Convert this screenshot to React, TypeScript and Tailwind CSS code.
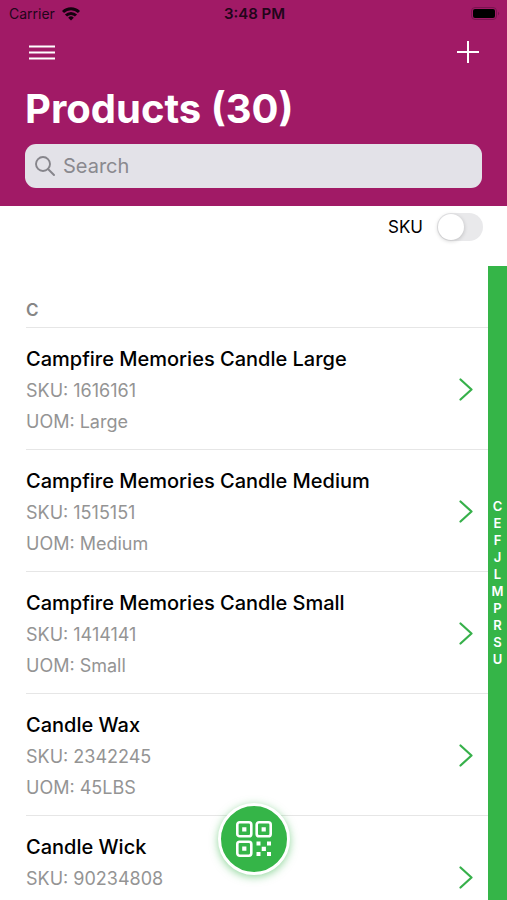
import React from "react";

type Product = { name: string; sku: string; uom?: string };

const products: Product[] = [
  { name: "Campfire Memories Candle Large", sku: "1616161", uom: "Large" },
  { name: "Campfire Memories Candle Medium", sku: "1515151", uom: "Medium" },
  { name: "Campfire Memories Candle Small", sku: "1414141", uom: "Small" },
  { name: "Candle Wax", sku: "2342245", uom: "45LBS" },
  { name: "Candle Wick", sku: "90234808" },
];

const letters = ["C", "E", "F", "J", "L", "M", "P", "R", "S", "U"];

function StatusBar() {
  return (
    <div className="grid h-7 grid-cols-3 items-center pr-[7px] pl-[9px] text-[#22051a]">
      <div className="flex items-center gap-[7px] text-sm">
        <span>Carrier</span>
        <svg width="18" height="14" viewBox="0 0 18 14" fill="none" stroke="#14020e" strokeWidth="3" aria-hidden="true">
          <path d="M1 5a11.3 11.3 0 0 1 16 0" />
          <path d="M4 8.5a7 7 0 0 1 10 0" />
          <path d="M6.2 10.7a4 4 0 0 1 5.6 0L9 13.6z" fill="#14020e" stroke="none" />
        </svg>
      </div>
      <span className="text-center text-[15px] font-semibold">3:48 PM</span>
      <svg className="justify-self-end" width="29" height="14" viewBox="0 0 29 14" aria-hidden="true">
        <rect x="0.5" y="0.5" width="25" height="12" rx="3.5" fill="none" stroke="#7a1350" />
        <rect x="2" y="2" width="22" height="9" rx="2" fill="#000" />
        <path d="M27 4.8a2 2 0 0 1 0 3.6z" fill="#7a1350" />
      </svg>
    </div>
  );
}

function Header() {
  return (
    <header className="shrink-0 bg-[#a11a66] pb-[18px]">
      <StatusBar />
      <div className="flex h-12 items-center justify-between px-7">
        <button type="button" aria-label="Menu" className="text-white">
          <svg width="28" height="18" viewBox="0 0 28 18" stroke="currentColor" strokeWidth="1.8">
            <path d="M1 3.5h26M1 9.5h26M1 15.5h26" />
          </svg>
        </button>
        <button type="button" aria-label="Add product" className="text-white">
          <svg width="22" height="22" viewBox="0 0 22 22" stroke="currentColor" strokeWidth="2">
            <path d="M0 11h22M11 0v22" />
          </svg>
        </button>
      </div>
      <div className="px-[25px]">
        <h1 className="h-[68px] text-[40px] leading-[66px] font-bold text-white">Products (30)</h1>
        <label className="flex h-11 items-center gap-2 rounded-[11px] bg-[#e3e2e8] px-[10px]">
          <svg width="20" height="20" viewBox="0 0 20 20" fill="none" stroke="#86858b" strokeWidth="1.9" strokeLinecap="round" aria-hidden="true">
            <circle cx="8" cy="8" r="7" />
            <path d="M13 13l6 6" />
          </svg>
          <input
            type="text"
            aria-label="Search"
            placeholder="Search"
            className="min-w-0 flex-1 bg-transparent text-xl text-black outline-none placeholder:text-[#8a898f]"
          />
        </label>
      </div>
    </header>
  );
}

function ProductRow({ name, sku, uom }: Product) {
  return (
    <li className="flex min-h-[122px] justify-between border-b border-[#e6e6e6] pt-[15px] pr-[15px] pb-3">
      <div>
        <h3 className="text-xl leading-8 font-medium text-black">{name}</h3>
        <p className="text-lg leading-[31px] text-[#949494]">SKU: {sku}</p>
        {uom && <p className="text-lg leading-[31px] text-[#949494]">UOM: {uom}</p>}
      </div>
      <button type="button" aria-label={"Open " + name} className="self-center text-[#36b04a]">
        <svg width="14" height="24" viewBox="0 0 14 24" fill="none" stroke="currentColor" strokeWidth="2.2" strokeLinecap="round" strokeLinejoin="round">
          <path d="M1.5 1.5l11 10-11 10" />
        </svg>
      </button>
    </li>
  );
}

function ScanButton() {
  return (
    <button
      type="button"
      aria-label="Scan code"
      className="absolute bottom-[25px] left-1/2 flex size-[72px] -translate-x-1/2 items-center justify-center rounded-full border-3 border-white bg-[#35b548] text-white shadow-[0_2px_8px_rgba(53,181,72,0.55)]"
    >
      <svg width="36" height="36" viewBox="0 0 36 36" fill="currentColor">
        <g fill="none" stroke="currentColor" strokeWidth="2.6">
          <rect x="1.3" y="1.3" width="14" height="14" rx="2.4" />
          <rect x="20.7" y="1.3" width="14" height="14" rx="2.4" />
          <rect x="1.3" y="20.7" width="14" height="14" rx="2.4" />
        </g>
        <path d="M6.2 6.2h4.2v4.2H6.2zM25.6 6.2h4.2v4.2h-4.2zM6.2 25.6h4.2v4.2H6.2z" />
        <path d="M20.5 20.5h4v4h-4zM31 20.5h4v4h-4zM25.7 25.7h4.2v4.2h-4.2zM20.5 31h4v4h-4zM31 31h4v4h-4z" />
      </svg>
    </button>
  );
}

export default function App() {
  return (
    <div className="relative flex h-screen flex-col overflow-hidden bg-white font-[Inter,'Liberation_Sans',sans-serif]">
      <Header />
      <div className="flex h-[60px] shrink-0 items-start justify-end pt-[7px] pr-6">
        <label className="flex items-center gap-3.5 text-[17px] leading-7 text-black">
          SKU
          <input
            type="checkbox"
            role="switch"
            className="h-7 w-[46px] appearance-none rounded-full bg-[#e9e9eb] p-px before:block before:size-[26px] before:rounded-full before:bg-white before:shadow-[0_1px_4px_rgba(0,0,0,0.2)] checked:bg-[#35b548] checked:before:translate-x-[18px]"
          />
        </label>
      </div>
      <main className="flex min-h-0 flex-1">
        <section className="min-w-0 flex-1 overflow-hidden pl-[26px]">
          <h2 className="border-b border-[#e6e6e6] pt-[30px] pb-[3px] text-[17px] leading-7 font-semibold text-[#868686]">C</h2>
          <ul>
            {products.map((p) => (
              <ProductRow key={p.sku} {...p} />
            ))}
          </ul>
        </section>
        <nav aria-label="Alphabet index" className="flex w-[19px] shrink-0 flex-col items-center justify-center bg-[#35b548]">
          {letters.map((l) => (
            <a key={l} href={"#" + l} className="text-[13px] leading-[17px] font-semibold text-white">
              {l}
            </a>
          ))}
        </nav>
      </main>
      <ScanButton />
    </div>
  );
}
